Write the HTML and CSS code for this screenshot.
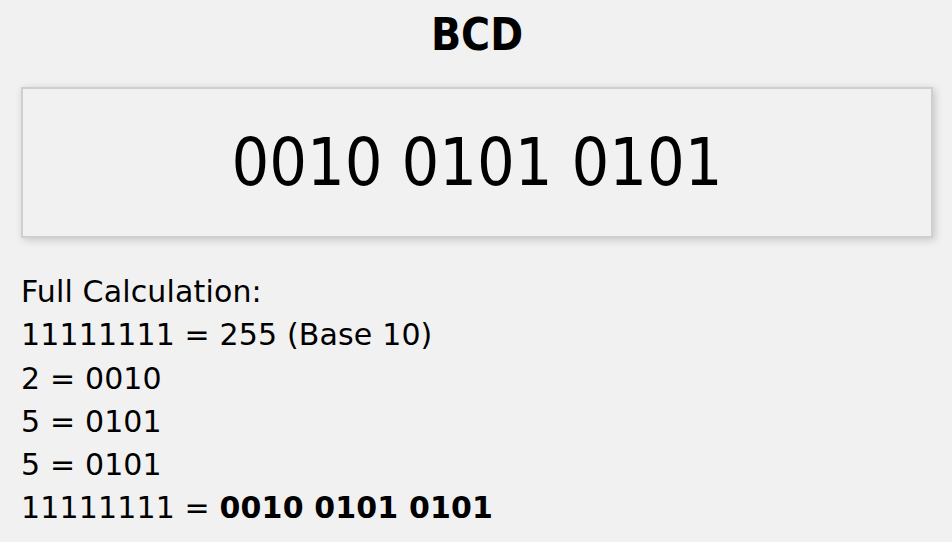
FILE: index.html
```html
<!DOCTYPE html>
<html>
<head>
<meta charset="utf-8">
<link rel="stylesheet" href="styles.css">
</head>
<body>
<div class="page">
  <h1 class="title">BCD</h1>
  <div class="result">0010 0101 0101</div>
  <div class="calc">
    <div class="line">Full Calculation:</div>
    <div class="line">11111111 = 255 (Base 10)</div>
    <div class="line">2 = 0010</div>
    <div class="line">5 = 0101</div>
    <div class="line">5 = 0101</div>
    <div class="line">11111111 = <b>0010 0101 0101</b></div>
  </div>
</div>
</body>
</html>
```
FILE: styles.css
```css
html, body {
  margin: 0;
  background: #f1f1f1;
}
body {
  font-family: "DejaVu Sans Condensed", "DejaVu Sans", sans-serif;
  color: #000;
}
.page {
  display: flex;
  flex-direction: column;
  padding: 0 19px 0 21px;
}
.title {
  margin: 0;
  padding-top: 9px;
  height: 78px;
  box-sizing: border-box;
  text-align: center;
  font-size: 44px;
  font-weight: bold;
  line-height: 52px;
}
.result {
  height: 151px;
  box-sizing: border-box;
  border: 2px solid #cfcfcf;
  background: #f1f1f1;
  box-shadow: 2px 2px 8px rgba(0, 0, 0, 0.18);
  display: flex;
  align-items: center;
  justify-content: center;
  font-size: 66px;
  margin-top: 9px;
}
.calc {
  margin-top: 32px;
  font-family: "DejaVu Sans", sans-serif;
  font-size: 30px;
  letter-spacing: 0.15px;
}
.line {
  line-height: 43.3px;
}
.calc b {
  font-weight: bold;
}
```
